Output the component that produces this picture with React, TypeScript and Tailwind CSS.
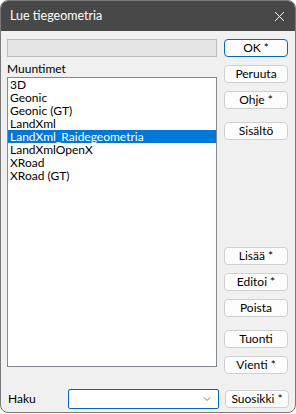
import { ChevronDown } from 'lucide-react'

const items = [
  '3D',
  'Geonic',
  'Geonic (GT)',
  'LandXml',
  'LandXml_Raidegeometria',
  'LandXmlOpenX',
  'XRoad',
  'XRoad (GT)',
]

const font = { fontFamily: 'Lato, "Noto Sans", sans-serif' }

function Btn({ label, primary, className = '' }: { label: string; primary?: boolean; className?: string }) {
  return (
    <button
      type="button"
      className={`flex h-[18px] w-[64px] items-center justify-center rounded-[4px] border bg-[#fdfdfd] text-[12px] leading-none text-black ${
        primary ? 'border-[#0067c0]' : 'border-[#d0d0d0]'
      } ${className}`}
    >
      {label}
    </button>
  )
}

export default function App() {
  return (
    <div className="h-[414px] w-[296px] bg-white" style={font}>
      <div className="flex h-[413px] w-[296px] flex-col overflow-hidden rounded-[8px] border border-[#7a7a7a] bg-[#f0f0f0]">
        {/* title bar */}
        <div className="flex h-[30px] shrink-0 items-center justify-between bg-[#484848] pl-[9px] pr-[9px]">
          <span className="text-[12.5px] text-white">Lue tiegeometria</span>
          <svg width="11" height="11" viewBox="0 0 11 11" className="mr-[1px]">
            <path d="M1 1 L10 10 M10 1 L1 10" stroke="#fff" strokeWidth="1" />
          </svg>
        </div>

        <div className="flex flex-1 flex-col px-[6px] pt-[8px]">
          <div className="flex gap-[7px]">
            <div className="flex w-[210px] flex-col">
              <div className="h-[18px] border border-[#bcbcbc] bg-[#e5e5e5]" />
              <div className="flex h-[20px] items-end pb-[1px] text-[12px] leading-[14px] text-black">Muuntimet</div>
              <div className="h-[290px] border border-[#828790] bg-white">
                {items.map((it) => (
                  <div
                    key={it}
                    className={`h-[13px] overflow-hidden px-[2px] text-[12px] leading-[13px] ${
                      it === 'LandXml_Raidegeometria' ? 'bg-[#0078d7] text-white' : 'text-black'
                    }`}
                  >
                    {it}
                  </div>
                ))}
              </div>
            </div>

            <div className="flex flex-col">
              <Btn label="OK *" primary />
              <Btn label="Peruuta" className="mt-[8px]" />
              <Btn label="Ohje *" className="mt-[8px]" />
              <Btn label="Sisältö" className="mt-[13px]" />
              <Btn label="Lisää *" className="mt-[107px]" />
              <Btn label="Editoi *" className="mt-[8px]" />
              <Btn label="Poista" className="mt-[8px]" />
              <Btn label="Tuonti" className="mt-[13px]" />
              <Btn label="Vienti *" className="mt-[8px]" />
            </div>
          </div>

          <div className="mt-[15px] flex items-center">
            <span className="w-[61px] pl-[1px] text-[12px] text-black">Haku</span>
            <div className="flex h-[20px] w-[151px] items-center justify-end rounded-[2px] border border-[#0067c0] bg-white pr-[5px]">
              <ChevronDown size={12} strokeWidth={1.5} className="text-[#555]" />
            </div>
            <Btn label="Suosikki *" className="ml-[6px]" />
          </div>
        </div>
      </div>
    </div>
  )
}
